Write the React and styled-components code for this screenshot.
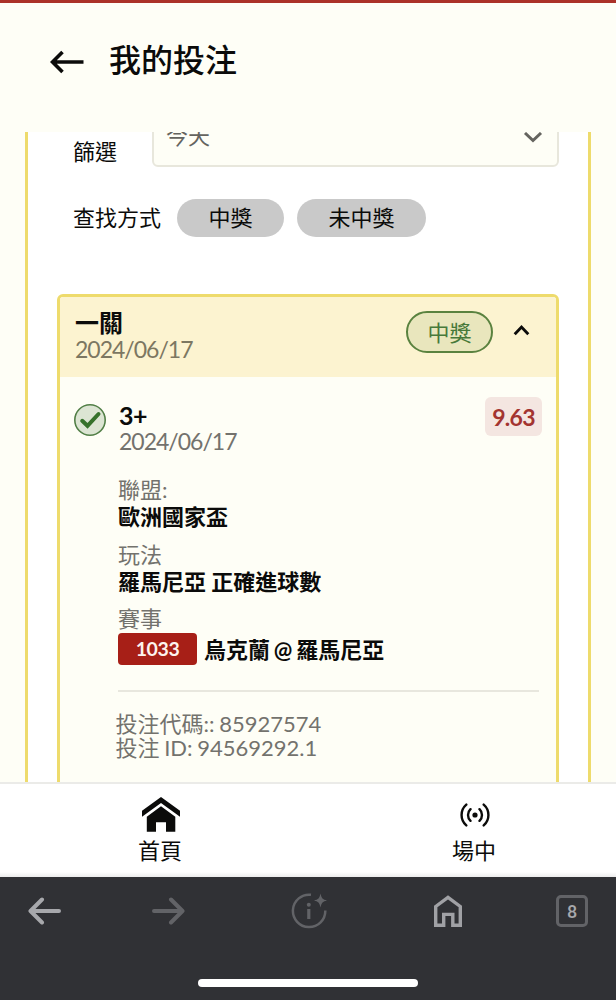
import { useState } from 'react';
import styled, { createGlobalStyle } from 'styled-components';

const GlobalStyle = createGlobalStyle`
    * {
        box-sizing: border-box;
    }

    body {
        margin: 0;
        background: #fefef6;
        color: #0b0b0a;
        font-family: Lato, "Noto Sans CJK TC", sans-serif;
        font-size: 22px;
    }

    button {
        padding: 0;
        border: none;
        background: none;
        color: inherit;
        font: inherit;
    }

    svg {
        display: block;
        flex-shrink: 0;
    }
`

const Screen = styled.div`
    display: flex;
    flex-direction: column;
    width: 616px;
    height: 1000px;
    overflow: hidden;
    border-top: 3px solid #ab3229;
`

const Header = styled.header`
    display: flex;
    align-items: center;
    gap: 25px;
    height: 129px;
    padding: 0 0 11px 50px;
    flex-shrink: 0;
`

const Title = styled.h1`
    margin: 0 0 4px;
    font-size: 32px;
    font-weight: 500;
    line-height: 40px;
`

const Content = styled.main`
    flex: 1;
    min-height: 0;
    overflow: hidden;
    padding: 0 25px;
`

const Panel = styled.section`
    height: 720px;
    padding: 0 29px;
    border: solid #eedb6c;
    border-width: 0 3.5px;
    background: #fff;
`

const FilterRow = styled.div`
    display: flex;
    justify-content: space-between;
    margin-top: -25px;
    padding-left: 16px;
`

const FilterLabel = styled.span`
    line-height: 30px;
    margin-top: ${props => props.$top || 0}px;
`

const Select = styled.button`
    display: flex;
    align-items: center;
    justify-content: space-between;
    width: 407px;
    height: 60px;
    padding: 0 14px 0 12px;
    border: 2px solid #e8e7dc;
    border-radius: 6px;
    background: #fefef6;
    color: #65645f;
`

const SelectText = styled.span`
    padding-bottom: 6px;
`

const SearchRow = styled.div`
    display: flex;
    align-items: center;
    height: 38px;
    margin-top: 32px;
    padding-left: 16px;
`

const Chip = styled.button`
    width: ${props => props.$width}px;
    height: 38px;
    margin-left: ${props => props.$gap}px;
    border-radius: 19px;
    background: #c9c9c9;
    line-height: 38px;
`

const Card = styled.article`
    height: 520px;
    margin-top: 57px;
    border: 3px solid #eedb6c;
    border-radius: 6px;
    background: #fefef6;
    overflow: hidden;
`

const CardHeader = styled.div`
    display: flex;
    justify-content: space-between;
    height: 80px;
    padding: 12px 26px 0 15px;
    background: #fcf3d0;
`

const CardTitle = styled.div`
    font-size: 24px;
    font-weight: 700;
    line-height: 28px;
`

const DateText = styled.div`
    color: ${props => props.$color || '#73726d'};
    font-size: 23px;
    letter-spacing: -1px;
    line-height: 24px;
`

const CardActions = styled.div`
    display: flex;
    align-items: center;
    gap: 20px;
    height: 42px;
    margin-top: 2px;

    svg {
        margin-bottom: 4px;
    }
`

const WinBadge = styled.span`
    width: 87px;
    height: 42px;
    border: 2px solid #5a823f;
    border-radius: 21px;
    background: #e9e6bd;
    color: #47793a;
    line-height: 39px;
    text-align: center;
`

const Bet = styled.div`
    display: grid;
    grid-template-columns: 32px 1fr 57px;
    column-gap: 13px;
    height: 79px;
    padding: 20px 14px 0;
`

const Check = styled.div`
    margin-top: 7px;
`

const BetName = styled.div`
    margin-top: 4px;
    font-size: 25px;
    font-weight: 700;
    letter-spacing: -0.6px;
    line-height: 28px;
`

const Odds = styled.div`
    height: 39px;
    border-radius: 6px;
    background: #f4e6e1;
    color: #a33430;
    font-size: 23px;
    font-weight: 700;
    letter-spacing: -0.7px;
    line-height: 40px;
    text-align: center;
`

const Details = styled.dl`
    margin: 21px 0 0;
    padding-left: 58px;
`

const Label = styled.dt`
    color: #73726d;
    line-height: 26px;
`

const Value = styled.dd`
    display: flex;
    align-items: center;
    gap: 7px;
    height: ${props => props.$height || 27}px;
    margin: 0 0 ${props => props.$bottom || 0}px;
    font-weight: 700;
    line-height: 27px;
    white-space: pre;
    word-spacing: ${props => props.$word || 0}px;
`

const MatchCode = styled.span`
    width: 79px;
    height: 32px;
    border-radius: 4px;
    background: #a71f17;
    color: #fdf3ee;
    font-size: 19.5px;
    letter-spacing: -0.4px;
    line-height: 32px;
    text-align: center;
`

const Receipt = styled.div`
    margin: 24px 17px 0 58px;
    padding-top: 20px;
    border-top: 2px solid #e8e7de;
    color: #73726d;
    line-height: 24px;
    word-spacing: -1px;
`

const ReceiptLine = styled.div`
    margin-left: -2.5px;
`

const TabBar = styled.nav`
    display: grid;
    grid-template-columns: 314px 314px;
    height: 95px;
    flex-shrink: 0;
    padding-left: 4px;
    border-top: 2px solid #ebebe8;
    background: linear-gradient(#fff 88px, #ececec);
`

const Tab = styled.button`
    display: flex;
    flex-direction: column;
    align-items: center;
    padding-top: 13px;
`

const TabIcon = styled.span`
    display: flex;
    align-items: center;
    height: 35px;
    margin-bottom: 5px;
`

const TabLabel = styled.span`
    padding-right: 2px;
    line-height: 28px;
`

const BrowserBar = styled.footer`
    display: flex;
    flex-direction: column;
    justify-content: space-between;
    align-items: center;
    height: 123px;
    flex-shrink: 0;
    padding: 15px 28px 13px;
    background: #303135;
`

const BrowserTools = styled.div`
    display: grid;
    grid-template-columns: 124px 139px 143px 122px 32px;
    align-items: center;
    width: 100%;
    height: 38px;
`

const TabCount = styled.span`
    width: 32px;
    height: 32px;
    border: 3px solid #626367;
    border-radius: 5px;
    color: #a7a8ac;
    font-family: Roboto, sans-serif;
    font-size: 18px;
    font-weight: 500;
    line-height: 27px;
    text-align: center;
`

const HomeIndicator = styled.div`
    width: 220px;
    height: 8px;
    border-radius: 4px;
    background: #fff;
`

function BackIcon(){
    return (
        <svg width="34" height="24" viewBox="0 0 34 24" fill="none" stroke="currentColor" strokeWidth="3.6">
            <path d="M33.5 12H3M12.5 2 2.5 12l10 10" />
        </svg>
    )
}

function Chevron({ size, up, stroke }){
    return (
        <svg width={size} height={size} viewBox="0 0 20 20" fill="none" stroke="currentColor" strokeWidth={stroke}>
            <path d={up ? 'M2 14.5 10 6l8 8.5' : 'M2 6l8 7.5L18 6'} />
        </svg>
    )
}

function CheckIcon(){
    return (
        <svg width="32" height="32" viewBox="0 0 32 32" fill="none">
            <circle cx="16" cy="16" r="15.2" fill="#dce5d3" stroke="#527f47" strokeWidth="1.6" />
            <path d="M8.2 16.8l5.3 5L24.5 10" stroke="#36722b" strokeWidth="4" strokeLinecap="round" />
        </svg>
    )
}

function HouseIcon(){
    return (
        <svg width="38" height="35" viewBox="0 0 38 35" fill="currentColor">
            <path d="M0 13.8 19 0l19 13.8v6L19 6 0 19.8z" />
            <path d="M19 9.3l14.3 10.4v15h-9.3v-9.5h-10v9.5H4.8v-15z" />
        </svg>
    )
}

function LiveIcon(){
    return (
        <svg width="30" height="24" viewBox="0 0 30 24" fill="none" stroke="currentColor" strokeWidth="2.4" strokeLinecap="round">
            <circle cx="15" cy="12" r="2.6" fill="currentColor" stroke="none" />
            <path d="M10.5 6.2a8 8 0 0 0 0 11.6M19.5 6.2a8 8 0 0 1 0 11.6M6.3 1.6a13.8 13.8 0 0 0 0 20.8M23.7 1.6a13.8 13.8 0 0 1 0 20.8" />
        </svg>
    )
}

function BrowserArrow({ forward }){
    return (
        <svg width="33" height="28" viewBox="0 0 33 28" fill="none" stroke={forward ? '#626367' : '#a7a8ac'} strokeWidth="4" strokeLinecap="round" strokeLinejoin="round">
            <path d={forward ? 'M2 14h28M19 2.5 30.5 14 19 25.5' : 'M31 14H3M14 2.5 2.5 14 14 25.5'} />
        </svg>
    )
}

function InfoIcon(){
    return (
        <svg width="38" height="36" viewBox="0 0 38 36" fill="none" stroke="#626367" strokeWidth="2.5">
            <path d="M20 1.8A16.2 16.2 0 1 0 34.3 17.5" />
            <path d="M17.8 16v10" strokeWidth="3.2" />
            <circle cx="17.8" cy="11.7" r="2" fill="#626367" stroke="none" />
            <path d="M29.5.5c1 4.7 2.2 6 6.5 7-4.3 1-5.5 2.3-6.5 7-1-4.7-2.2-6-6.5-7 4.3-1 5.5-2.3 6.5-7z" fill="#626367" stroke="none" />
        </svg>
    )
}

function BrowserHome(){
    return (
        <svg width="28" height="32" viewBox="0 0 28 32" fill="none" stroke="#a0a1a5" strokeWidth="3.4">
            <path d="M1.7 30.2V11.5L14 2.3l12.3 9.2v18.7h-7.5V19.4H9.7v10.8z" />
        </svg>
    )
}

function App(){

    const [open, setOpen] = useState(true);

    return (
        <Screen>
            <GlobalStyle />
            <Header>
                <BackIcon />
                <Title>我的投注</Title>
            </Header>
            <Content>
                <Panel>
                    <FilterRow>
                        <FilterLabel $top={30}>篩選</FilterLabel>
                        <Select>
                            <SelectText>今天</SelectText>
                            <Chevron size={20} stroke={3} />
                        </Select>
                    </FilterRow>
                    <SearchRow>
                        <FilterLabel>查找方式</FilterLabel>
                        <Chip $width={107} $gap={16}>中獎</Chip>
                        <Chip $width={129} $gap={13}>未中獎</Chip>
                    </SearchRow>
                    <Card>
                        <CardHeader onClick={() => setOpen(!open)}>
                            <div>
                                <CardTitle>一關</CardTitle>
                                <DateText $color="#7c7762">2024/06/17</DateText>
                            </div>
                            <CardActions>
                                <WinBadge>中獎</WinBadge>
                                <Chevron size={17} up={open} stroke={3.4} />
                            </CardActions>
                        </CardHeader>
                        {open &&
                            <>
                                <Bet>
                                    <Check><CheckIcon /></Check>
                                    <div>
                                        <BetName>3+</BetName>
                                        <DateText>2024/06/17</DateText>
                                    </div>
                                    <Odds>9.63</Odds>
                                </Bet>
                                <Details>
                                    <Label>聯盟:</Label>
                                    <Value $bottom={12}>歐洲國家盃</Value>
                                    <Label>玩法</Label>
                                    <Value $bottom={11}>羅馬尼亞 正確進球數</Value>
                                    <Label>賽事</Label>
                                    <Value $height={34} $word={-1.5}>
                                        <MatchCode>1033</MatchCode>
                                        烏克蘭 @ 羅馬尼亞
                                    </Value>
                                </Details>
                                <Receipt>
                                    <ReceiptLine>投注代碼:: 85927574</ReceiptLine>
                                    <ReceiptLine>投注 ID: 94569292.1</ReceiptLine>
                                </Receipt>
                            </>
                        }
                    </Card>
                </Panel>
            </Content>
            <TabBar>
                <Tab>
                    <TabIcon><HouseIcon /></TabIcon>
                    <TabLabel>首頁</TabLabel>
                </Tab>
                <Tab>
                    <TabIcon><LiveIcon /></TabIcon>
                    <TabLabel>場中</TabLabel>
                </Tab>
            </TabBar>
            <BrowserBar>
                <BrowserTools>
                    <BrowserArrow />
                    <BrowserArrow forward />
                    <InfoIcon />
                    <BrowserHome />
                    <TabCount>8</TabCount>
                </BrowserTools>
                <HomeIndicator />
            </BrowserBar>
        </Screen>
    )
}

export default App;
